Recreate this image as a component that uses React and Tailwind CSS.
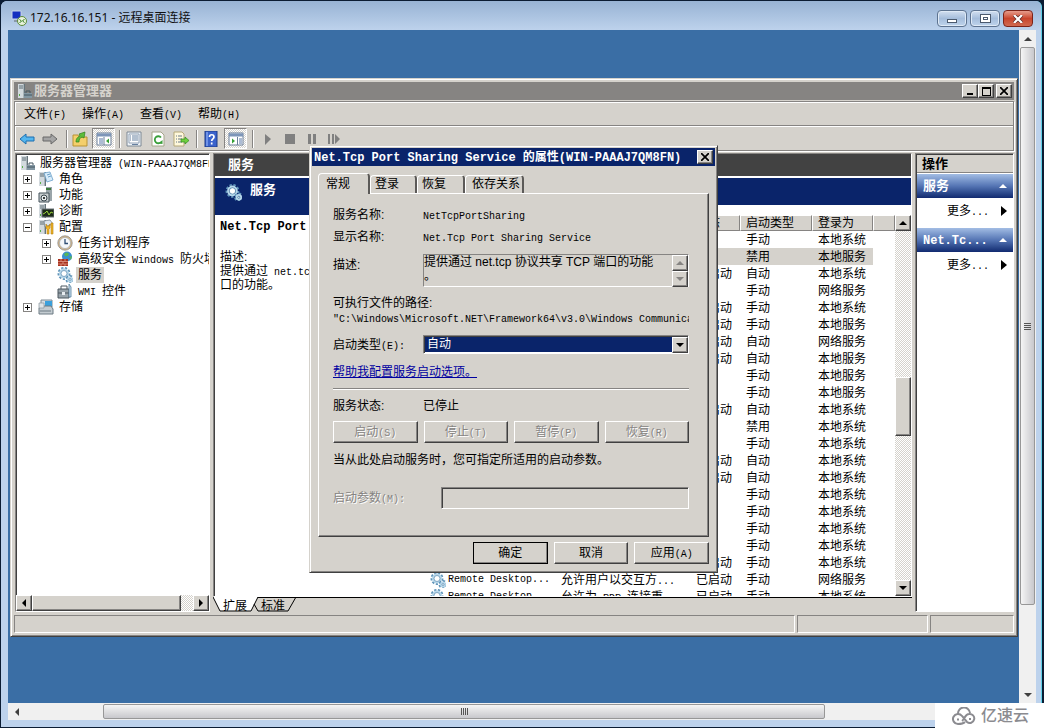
const raised = 'bg-[#d5d2cc] border border-t-white border-l-white border-r-[#404040] border-b-[#404040] shadow-[inset_-1px_-1px_0_#868482]'
const sunken = 'border border-t-[#868482] border-l-[#868482] border-r-white border-b-white'
const dither = 'bg-[repeating-conic-gradient(#d5d2cc_0_25%,#fff_0_50%)] bg-[length:2px_2px]'

const rows = [
  ['', '', '', '手动', '本地系统'],
  ['', '', '', '禁用', '本地服务'],
  ['', '', '已启动', '自动', '本地系统'],
  ['', '', '', '手动', '网络服务'],
  ['', '', '已启动', '手动', '本地系统'],
  ['', '', '已启动', '手动', '本地服务'],
  ['', '', '已启动', '自动', '网络服务'],
  ['', '', '已启动', '自动', '本地服务'],
  ['', '', '', '手动', '本地服务'],
  ['', '', '', '手动', '本地服务'],
  ['', '', '已启动', '自动', '本地系统'],
  ['', '', '', '禁用', '本地系统'],
  ['', '', '', '手动', '本地系统'],
  ['', '', '已启动', '自动', '本地系统'],
  ['', '', '已启动', '自动', '本地系统'],
  ['', '', '', '手动', '本地系统'],
  ['', '', '', '手动', '本地系统'],
  ['', '', '', '手动', '本地系统'],
  ['', '', '', '手动', '本地系统'],
  ['', '', '已启动', '手动', '本地系统'],
  ['Remote Desktop...', '允许用户以交互方...', '已启动', '手动', '网络服务'],
  ['Remote Desktop...', '允许为 RDP 连接重...', '已启动', '手动', '本地系统'],
]

const tree = [
  { label: '角色', icon: 'roles', sign: '+' },
  { label: '功能', icon: 'features', sign: '+' },
  { label: '诊断', icon: 'diag', sign: '+' },
  { label: '配置', icon: 'config', sign: '-' },
  { label: '任务计划程序', icon: 'clock', sign: '+', child: true },
  { label: '高级安全 Windows 防火墙', icon: 'firewall', sign: '+', child: true },
  { label: '服务', icon: 'gears', child: true, selected: true },
  { label: 'WMI 控件', icon: 'wmi', child: true },
  { label: '存储', icon: 'storage', sign: '+' },
]

// Half-width runs are set in the mono face so two of them fill one CJK cell
function Mixed({ children, latin = 'text-[10px]' }) {
  return children.split(/([\x20-\x7e]+)/).filter(Boolean).map((part, i) =>
    /^[\x20-\x7e]+$/.test(part)
      ? <span key={i} className={`whitespace-pre font-['Liberation_Mono',monospace] leading-none ${latin}`}>{part}</span>
      : part
  )
}

function Arrow({ dir, className = 'fill-black' }) {
  const d = {
    up: 'M0 6 L4 2 L8 6Z',
    down: 'M0 2 L4 6 L8 2Z',
    left: 'M6 0 L2 4 L6 8Z',
    right: 'M2 0 L6 4 L2 8Z',
  }[dir]
  return <svg viewBox="0 0 8 8" className={`size-2 shrink-0 ${className}`}><path d={d} /></svg>
}

function Tower() {
  return (
    <>
      <path d="M1 1h7v14H1z" fill="#a9b3b8" />
      <path d="M1 1h5v14H1z" fill="#d3dade" />
      <path d="M2 3h4M2 5h4" stroke="#5c6c74" />
      <path d="M7.500 1v14" stroke="#66747b" />
      <path d="M2 11h1v2H2z" fill="#5bb04a" />
    </>
  )
}

function Gear({ x, y, r }) {
  return (
    <g transform={`translate(${x} ${y})`}>
      <circle r={r} fill="none" stroke="#5f93b8" strokeWidth="3" strokeDasharray="2 1.400" />
      <circle r={r - 1} fill="none" stroke="#b7d7ea" strokeWidth="2" />
      <circle r={r - 2} fill="#fff" stroke="#4d83aa" strokeWidth=".7" />
    </g>
  )
}

const drawings = {
  server: <><Tower /><path d="M7 10h8v5H7z" fill="#8397a3" /><path d="M9 10V8h4v2M7 12h8" fill="none" stroke="#445661" /></>,
  roles: <><Tower /><path d="M6 2l6-1 3 8-6 2z" fill="#d8ecfa" stroke="#6aa0c8" strokeWidth=".8" /><path d="M9 4l3-1M10 6l3-1" stroke="#6aa0c8" /></>,
  features: <><path d="M8 0h6v14H8z" fill="#9aa5aa" /><path d="M8 2h5" stroke="#3c7a3c" strokeWidth="2" /><path d="M1 6h10v9H1z" fill="#c8cdd0" stroke="#45525a" /><circle cx="6" cy="11" r="3" fill="#e9eef0" stroke="#38444b" /><circle cx="6" cy="11" r="1" /></>,
  diag: <><Tower /><path d="M4 6h12v8H4z" fill="#1c2a18" stroke="#6b7378" /><path d="M5 11l2-1 2-2 2 4 2-3 2 1" fill="none" stroke="#9ad13c" /></>,
  config: <><Tower /><path d="M6 2l6-1 3 4-8 3z" fill="#dfe6ee" stroke="#7a8894" strokeWidth=".8" /><path d="M8 5v4l1 1v5h2v-5l1-1V5l-1 2H9zM13 4h2v11h-2z" fill="#f0b52a" stroke="#b37c0c" strokeWidth=".6" /></>,
  clock: <><circle cx="8" cy="8" r="7.200" fill="#d9b98a" stroke="#8a8a8a" strokeWidth=".8" /><circle cx="8" cy="8" r="5.500" fill="#f5f8fb" stroke="#9aa5ad" strokeWidth=".6" /><path d="M8 4v4.500h3" fill="none" stroke="#2d4d74" strokeWidth="1.300" /></>,
  firewall: <><circle cx="10" cy="5.500" r="5" fill="#3b8fd0" /><path d="M7 3q3-3 5 0q-1 3-4 2zM12 6l3-1-1 4z" fill="#58b558" /><path d="M1 8h10v7H1z" fill="#a8321e" /><path d="M1 10.500h10M1 13h10M4 8v2.500M8 8v2.500M6 10.500V13M4 13v2M8 13v2" stroke="#e6a493" strokeWidth=".7" /></>,
  gears: <><Gear x={7} y={6.5} r={5} /><Gear x={13} y={12.5} r={3} /></>,
  wmi: <><path d="M1 6h11v9H1z" fill="#98a3aa" stroke="#4d5960" /><path d="M4 6V3h6v3M1 10h11" fill="none" stroke="#4d5960" /><path d="M12 1l2 3v10h-2z" fill="#cfe0ee" stroke="#54809e" strokeWidth=".8" /><path d="M5 9h3v3H5z" fill="#e8edf0" /></>,
  storage: <><path d="M3 1h11v7H3z" fill="#d6dde2" stroke="#7d8b94" /><path d="M7 2h7v5H7z" fill="#3aa0dc" /><path d="M1 9l3-2h9l2 3v5H1z" fill="#c4ccd1" stroke="#6c7a83" /><path d="M2 12h11" stroke="#6c7a83" /><path d="M1 4h5v5H1z" fill="#dfe4e6" stroke="#8b979e" strokeWidth=".7" /></>,
  back: <path d="M1 8l6-5v3h8v4H7v3z" fill="#54b6ee" stroke="#1d6fb0" />,
  forward: <path d="M15 8L9 3v3H1v4h8v3z" fill="#a5a5a5" stroke="#686868" />,
  folder: <><path d="M1 4h5l1 2h8v9H1z" fill="#f4cf6b" stroke="#b99335" /><path d="M4 11c0-4 2-5 4-6L7 3l6-2-1 6-2-1c-2 1-3 2-3 5z" fill="#5ebd3a" stroke="#2f7f1c" strokeWidth=".7" /></>,
  paneLeft: <><path d="M1 2h14v12H1z" fill="#fff" stroke="#6b7f99" /><path d="M1 4h14" stroke="#7d95b8" strokeWidth="3" /><path d="M8 6v8" stroke="#6b7f99" /><path d="M3 8h4M3 10h4M3 12h4" stroke="#5a78a8" /><path d="M13 7.500v5l-3-2.500z" fill="#35a035" /></>,
  paneRight: <><path d="M1 2h14v12H1z" fill="#fff" stroke="#6b7f99" /><path d="M1 4h14" stroke="#7d95b8" strokeWidth="3" /><path d="M9.500 6v8" stroke="#6b7f99" /><path d="M11 8h3M11 10h3M11 12h3" stroke="#5a78a8" /><path d="M4 7.500v5l3-2.500z" fill="#35a035" /></>,
  props: <><path d="M1 1h14v14H1z" fill="#eef3f8" stroke="#7c8894" /><path d="M3 3h10v9H3z" fill="#fff" stroke="#8fa0b4" /><path d="M4 5h1M6 5h6M4 7h1M6 7h6M4 9h1M6 9h6M6 13.500h6" stroke="#6781a0" /></>,
  refresh: <><path d="M2 1h9l3 3v11H2z" fill="#fff" stroke="#a5a58a" /><path d="M11 6.500A3.500 3.500 0 1 0 11 11" fill="none" stroke="#3a9f3a" strokeWidth="1.800" /><path d="M8.500 12.500l4 .5V9z" fill="#3a9f3a" /></>,
  exportList: <><path d="M1 1h8l2 2v12H1z" fill="#fff8dc" stroke="#b5a878" /><path d="M3 5h1M5 5h4M3 8h1M5 8h4M3 11h1M5 11h4" stroke="#6a7a8a" /><path d="M8 8h4V6l4 3.500-4 3.500v-2H8z" fill="#6fcf3f" stroke="#2f8a1c" strokeWidth=".7" /></>,
  help: <><path d="M2 0h12v16H2z" fill="#3a63cc" stroke="#1c3a86" /><path d="M3 1h2v14H3z" fill="#6f92e6" /><path d="M6.500 6c0-3 4.500-3 4.500 0c0 2-2.300 1.800-2.300 4M8.700 11.500v2" fill="none" stroke="#fff" strokeWidth="1.700" /></>,
  play: <path d="M5 3l6 5-6 6z" fill="#808080" />,
  stop: <path d="M3 3h10v10H3z" fill="#808080" />,
  pause: <path d="M4 3h3v10H4zM9 3h3v10H9z" fill="#808080" />,
  step: <path d="M2 3h2v10H2zM6 3h2v10H6zM9 3l5 5-5 5z" fill="#808080" />,
  rdp: <><path d="M1 1h9v8H1z" fill="#1530c0" stroke="#c8d4e8" /><path d="M3 10h5v2H3z" fill="#8a98a8" /><circle cx="11" cy="11" r="4.500" fill="#e8f2dc" stroke="#5b8a3a" /><path d="M8.500 9.500l2 1.500-2 2M13.500 9l-2 2 2 1.500" fill="none" stroke="#2f7a1c" /></>,
}

function Icon({ name, className = 'size-4' }) {
  return <svg viewBox="0 0 16 16" className={`shrink-0 ${className}`}>{drawings[name]}</svg>
}

function ToolButton({ icon, label, pressed, className = '' }) {
  return (
    <button
      aria-label={label}
      className={`flex h-[21px] items-center justify-center ${pressed ? `w-[23px] ${sunken} ${dither}` : 'w-4'} ${className}`}
    >
      <Icon name={icon} />
    </button>
  )
}

function Separator() {
  return <span className="h-[18px] w-0.5 border-l border-r border-l-[#868482] border-r-white" />
}

function ScrollButton({ dir, muted }) {
  return (
    <button aria-label={dir} className={`flex size-4 shrink-0 items-center justify-center ${raised}`}>
      <Arrow dir={dir} className={muted ? 'fill-[#868482]' : 'fill-black'} />
    </button>
  )
}

function CloseGlyph({ className = 'stroke-black' }) {
  return <svg viewBox="0 0 8 8" className={`size-2 ${className}`}><path d="M0 0l8 8M8 0L0 8" strokeWidth="1.700" /></svg>
}

function ClientTitleBar() {
  const btn = 'flex h-[17px] w-[30px] items-center justify-center rounded-sm border border-[#5d7390] bg-linear-to-b from-[#d3e0f0] via-[#a5bddb] to-[#bfd4ec] shadow-[inset_0_0_0_1px_#dfeaf6]'
  return (
    <header className="flex h-[29px] shrink-0 items-center bg-linear-to-b from-[#98b3d4] to-[#bdd2ec] pt-1 pr-2 pl-2.5">
      <Icon name="rdp" />
      <h1 className="ml-[3px] flex-1 font-['Noto_Sans','Noto_Sans_CJK_SC',sans-serif] text-xs text-[#111]">172.16.16.151 - 远程桌面连接</h1>
      <div className="mt-0.5 flex gap-[3px]">
        <button aria-label="最小化" className={btn}>
          <span className="mt-1 h-1 w-2.5 border border-[#4b5a6e] bg-white" />
        </button>
        <button aria-label="还原" className={btn}>
          <span className="flex h-[9px] w-[11px] items-center justify-center border border-[#4b5a6e] bg-white">
            <span className="h-[3px] w-[5px] border border-[#4b5a6e]" />
          </span>
        </button>
        <button aria-label="关闭" className="flex h-[17px] w-[30px] items-center justify-center rounded-sm border border-[#7c2318] bg-linear-to-b from-[#e69c8c] via-[#c8442c] to-[#d06a50]">
          <svg viewBox="0 0 10 8" className="h-2 w-2.5">
            <path d="M1 0l8 8M9 0L1 8" stroke="#5b2a28" strokeWidth="3.600" />
            <path d="M1 0l8 8M9 0L1 8" stroke="#fff" strokeWidth="2.200" />
          </svg>
        </button>
      </div>
    </header>
  )
}

function ManagerTitle() {
  const btn = `flex h-3.5 w-4 items-center justify-center ${raised}`
  return (
    <div className="flex h-[18px] shrink-0 items-center bg-[#868482] pr-0.5 pl-[3px]">
      <Icon name="server" />
      <h2 className="ml-px flex-1 text-[13px] leading-4 font-bold text-[#d5d2cc]">服务器管理器</h2>
      <button aria-label="最小化窗口" className={btn}><span className="mt-1.5 h-0.5 w-1.5 bg-black" /></button>
      <button aria-label="最大化窗口" className={btn}><span className="h-[9px] w-[9px] border border-t-2 border-black" /></button>
      <button aria-label="关闭窗口" className={`ml-0.5 ${btn}`}><CloseGlyph /></button>
    </div>
  )
}

function Toolbar() {
  return (
    <div className="flex h-6 items-center border-t border-white pl-1">
      <ToolButton icon="back" label="后退" />
      <ToolButton icon="forward" label="前进" className="mr-2 ml-[7px]" />
      <Separator />
      <ToolButton icon="folder" label="向上" className="mx-1" />
      <ToolButton icon="paneLeft" label="显示控制台树" pressed className="mr-1" />
      <Separator />
      <ToolButton icon="props" label="属性" className="ml-[5px]" />
      <ToolButton icon="refresh" label="刷新" className="ml-2" />
      <ToolButton icon="exportList" label="导出列表" className="mr-[7px] ml-[7px]" />
      <Separator />
      <ToolButton icon="help" label="帮助" className="mx-[5px]" />
      <ToolButton icon="paneRight" label="显示操作窗格" pressed className="mr-[5px]" />
      <Separator />
      <div className="ml-1.5 flex gap-1.5">
        <ToolButton icon="play" label="启动服务" />
        <ToolButton icon="stop" label="停止服务" />
        <ToolButton icon="pause" label="暂停服务" />
        <ToolButton icon="step" label="重新启动服务" />
      </div>
    </div>
  )
}

function TreeItem({ item }) {
  return (
    <li className={`flex h-4 items-center whitespace-nowrap ${item.child ? 'pl-6' : 'pl-[5px]'}`}>
      {item.sign ? (
        <span className="relative mr-1.5 size-[9px] shrink-0 border border-[#868482]">
          <span className="absolute top-[3px] left-px h-px w-[5px] bg-black" />
          {item.sign === '+' && <span className="absolute top-px left-[3px] h-[5px] w-px bg-black" />}
        </span>
      ) : <span className="mr-1.5 w-[9px] shrink-0" />}
      <Icon name={item.icon} />
      <span className={`ml-[3px] px-0.5 leading-4 ${item.selected ? 'bg-[#d5d2cc]' : ''}`}><Mixed>{item.label}</Mixed></span>
    </li>
  )
}

function TreePane() {
  return (
    <nav className={`flex w-[195px] shrink-0 flex-col bg-white ${sunken} shadow-[inset_1px_1px_0_#404040]`}>
      <div className="flex-1 overflow-hidden pt-px pl-0.5">
        <div className="flex h-4 items-center pl-0.5 whitespace-nowrap">
          <Icon name="server" />
          <span className="ml-1"><Mixed>服务器管理器 (WIN-PAAAJ7QM8FN)</Mixed></span>
        </div>
        <ul>{tree.map((item) => <TreeItem key={item.label} item={item} />)}</ul>
      </div>
      <div className={`flex h-4 ${dither}`}>
        <ScrollButton dir="left" />
        <div className={`mr-3 flex-1 ${raised}`} />
        <ScrollButton dir="right" />
      </div>
    </nav>
  )
}

function ServiceTable() {
  const head = 'h-4 border-t border-r border-b border-l border-t-white border-l-white border-r-[#868482] border-b-[#868482] bg-[#d5d2cc] pl-[5px] text-left font-normal leading-none'
  return (
    <div className="flex min-h-0 flex-1">
      <div className="flex-1 overflow-hidden">
        <table className="w-full table-fixed border-separate border-spacing-0 whitespace-nowrap">
          <colgroup>
            <col className="w-[125px]" />
            <col className="w-[135px]" />
            <col className="w-[50px]" />
            <col className="w-[72px]" />
            <col className="w-[61px]" />
            <col />
          </colgroup>
          <thead>
            <tr>
              {['名称', '描述', '状态', '启动类型', '登录为', ''].map((h, i) => <th key={i} className={head}>{h}</th>)}
            </tr>
          </thead>
          <tbody>
            {rows.map((row, i) => (
              <tr key={i} className="h-[17px]">
                {row.map((cell, j) => (
                  <td key={j} className={`h-[17px] overflow-hidden p-0 leading-4 ${j ? 'pl-1.5' : ''} ${i === 1 ? 'bg-[#d5d2cc]' : ''}`}>
                    {j === 0 && cell ? (
                      <span className="flex items-center gap-0.5"><Icon name="gears" /><Mixed>{cell}</Mixed></span>
                    ) : <Mixed>{cell}</Mixed>}
                  </td>
                ))}
                <td />
              </tr>
            ))}
          </tbody>
        </table>
      </div>
      <div className={`flex w-4 flex-col ${dither}`}>
        <ScrollButton dir="up" />
        <div className="flex-[147]" />
        <div className={`flex-[57] ${raised}`} />
        <div className="flex-[145]" />
        <ScrollButton dir="down" />
      </div>
    </div>
  )
}

function ServicesPane() {
  return (
    <section className="flex min-w-0 flex-1 flex-col">
      <div className={`flex min-h-0 flex-1 flex-col bg-white ${sunken} shadow-[inset_1px_1px_0_#404040]`}>
        <h2 className="h-[22px] shrink-0 bg-[#424242] pl-3.5 text-[13px] leading-[22px] font-bold text-white">服务</h2>
        <div className="mt-0.5 flex min-h-0 flex-1 pl-px">
          <div className="w-[215px] shrink-0">
            <div className="flex h-[37px] items-start bg-[#0a246a] pt-1 pl-2.5">
              <Icon name="gears" className="mt-0.5 size-[17px]" />
              <h3 className="ml-2 text-[13px] leading-4 font-bold text-white">服务</h3>
            </div>
            <div className="w-[205px] pt-1 pl-[5px] leading-[14px]">
              <p className="h-[31px] overflow-hidden font-bold whitespace-nowrap"><Mixed latin="text-xs">Net.Tcp Port Sharing</Mixed></p>
              <p>描述:</p>
              <p><Mixed>提供通过 net.tcp 协议共享 TCP 端口的功能。</Mixed></p>
            </div>
          </div>
          <div className="flex min-w-0 flex-1 flex-col">
            <div className="mb-2.5 h-[27px] shrink-0 bg-[#0a246a]" />
            <ServiceTable />
          </div>
        </div>
      </div>
      <div className="relative flex h-[15px] shrink-0 border-t border-black pt-px">
        <svg viewBox="0 0 83 15" className="absolute -top-px left-0 h-[15px] w-[83px]">
          <path d="M0 0l7 14h31l7-14z" fill="#fff" />
          <path d="M0 0l7 14h31l7-14M41 7l4 7h30l8-14" fill="none" stroke="#000" />
        </svg>
        <button className="relative ml-2.5 leading-[14px]">扩展</button>
        <button className="relative ml-3.5 leading-[14px]">标准</button>
      </div>
    </section>
  )
}

function ActionGroup({ title }) {
  return (
    <div className="mb-[5px]">
      <div className="flex h-6 items-center justify-between bg-linear-to-b from-[#a3bde4] via-[#5575b4] to-[#122a70] pr-1.5 pl-1.5 text-[13px] font-bold text-white">
        <span><Mixed latin="text-xs">{title}</Mixed></span>
        <Arrow dir="up" className="fill-white" />
      </div>
      <button className="flex h-[25px] w-full items-center justify-between pr-1.5 pl-[30px]">
        <span><Mixed>更多...</Mixed></span>
        <svg viewBox="0 0 6 10" className="h-2.5 w-1.5"><path d="M0 0l6 5-6 5z" /></svg>
      </button>
    </div>
  )
}

function ActionsPane() {
  return (
    <aside className={`w-[99px] shrink-0 bg-white ${sunken} shadow-[inset_1px_1px_0_#404040]`}>
      <div className="pt-px pl-px">
        <h2 className="mb-px h-[18px] border-b border-[#868482] bg-[#d5d2cc] pl-[5px] text-[13px] leading-[17px] font-bold">操作</h2>
        <ActionGroup title="服务" />
        <ActionGroup title="Net.Tc..." />
      </div>
    </aside>
  )
}

function ServerManager() {
  return (
    <main className="mt-12 mr-px mb-[66px] ml-0.5 flex min-w-0 flex-1 flex-col border border-t-[#d5d2cc] border-r-[#404040] border-b-[#404040] border-l-[#d5d2cc] bg-[#d5d2cc] p-[3px] shadow-[inset_1px_1px_0_#fff,inset_-1px_-1px_0_#868482]">
      <ManagerTitle />
      <div className="mt-px border border-[#868482] shadow-[inset_1px_1px_0_#fff,1px_1px_0_#fff]">
        <div className="flex h-6 items-center gap-4 border-b border-[#868482] pl-[9px]">
          {['文件(F)', '操作(A)', '查看(V)', '帮助(H)'].map((m) => (
            <button key={m} className="leading-4"><Mixed>{m}</Mixed></button>
          ))}
        </div>
        <Toolbar />
      </div>
      <div className="mt-0.5 ml-px flex min-h-0 flex-1 gap-[3px]">
        <TreePane />
        <ServicesPane />
        <ActionsPane />
      </div>
      <footer className="mt-[3px] flex h-[18px] shrink-0 gap-0.5">
        <div className={`flex-1 ${sunken}`} />
        <div className={`w-[131px] ${sunken}`} />
        <div className={`w-[84px] ${sunken}`} />
      </footer>
    </main>
  )
}

function DialogButton({ children, disabled, primary }) {
  return (
    <button
      disabled={disabled}
      className={`flex h-[22px] flex-1 items-center justify-center ${raised} ${disabled ? 'text-[#868482] [text-shadow:1px_1px_0_#fff]' : ''} ${primary ? 'outline outline-1 -outline-offset-1 outline-black' : ''}`}
    >
      <span><Mixed>{children}</Mixed></span>
    </button>
  )
}

function PropertiesDialog() {
  const edge = 'border-t border-r-2 border-l border-t-white border-r-[#5c5a58] border-l-white rounded-t-sm text-left'
  const tab = `h-[18px] leading-[17px] ${edge}`
  return (
    <div role="dialog" className="absolute top-[115px] left-[301px] w-[409px] border border-t-[#d5d2cc] border-r-[#404040] border-b-[#404040] border-l-[#d5d2cc] bg-[#d5d2cc] p-0.5 shadow-[inset_1px_1px_0_#fff,inset_-1px_-1px_0_#868482]">
      <div className="flex h-[18px] items-center bg-[#0a246a] pr-0.5 pl-0.5 text-white">
        <h2 className="flex-1 font-bold whitespace-nowrap"><Mixed latin="text-xs">Net.Tcp Port Sharing Service 的属性(WIN-PAAAJ7QM8FN)</Mixed></h2>
        <button aria-label="关闭对话框" className={`flex h-3.5 w-4 items-center justify-center ${raised}`}><CloseGlyph /></button>
      </div>
      <div className="px-1.5 pt-[7px] pb-1.5">
        <div className="flex items-end">
          <button className={`relative z-10 -mb-px h-[21px] w-[52px] bg-[#d5d2cc] pb-px pl-[7px] ${edge}`}>常规</button>
          <button className={`w-[47px] pl-1 ${tab}`}>登录</button>
          <button className={`w-12 pl-1 ${tab}`}>恢复</button>
          <button className={`w-[59px] pl-1.5 ${tab}`}>依存关系</button>
        </div>
        <div className={`pt-2.5 pr-[19px] pb-[27px] pl-3.5 ${raised}`}>
          <dl className="grid grid-cols-[90px_1fr] leading-[22px]">
            <dt>服务名称:</dt>
            <dd><Mixed>NetTcpPortSharing</Mixed></dd>
            <dt>显示名称:</dt>
            <dd><Mixed>Net.Tcp Port Sharing Service</Mixed></dd>
          </dl>
          <div className="mt-1.5 flex">
            <label htmlFor="desc" className="w-[90px] leading-[22px]">描述:</label>
            <div className={`flex h-[33px] flex-1 ${sunken}`}>
              <textarea
                id="desc"
                readOnly
                className="h-full flex-1 resize-none overflow-hidden leading-[14px] outline-none"
                defaultValue={'提供通过 net.tcp 协议共享 TCP 端口的功能\n。'}
              />
              <div className="flex flex-col">
                <ScrollButton dir="up" muted />
                <ScrollButton dir="down" muted />
              </div>
            </div>
          </div>
          <label htmlFor="path" className="mt-2 block leading-4">可执行文件的路径:</label>
          <input
            id="path"
            readOnly
            className="block h-4 w-full font-['Liberation_Mono',monospace] text-[10px] outline-none"
            defaultValue={'"C:\\Windows\\Microsoft.NET\\Framework64\\v3.0\\Windows Communication'}
          />
          <div className="mt-2 flex items-center">
            <label htmlFor="startup" className="w-[90px]"><Mixed>启动类型(E):</Mixed></label>
            <div className={`relative h-[19px] flex-1 bg-white p-px ${sunken} shadow-[inset_1px_1px_0_#404040]`}>
              <select id="startup" className="block h-[15px] w-[249px] appearance-none bg-[#0a246a] pl-0.5 leading-[15px] text-white outline-none">
                <option>自动</option>
                <option>手动</option>
                <option>禁用</option>
              </select>
              <span className={`pointer-events-none absolute top-px right-0 flex size-4 items-center justify-center ${raised}`}>
                <Arrow dir="down" />
              </span>
            </div>
          </div>
          <a href="#help" className="mt-2.5 block w-fit leading-4 text-[#0000a0] underline">帮助我配置服务启动选项。</a>
          <hr className="mt-2 h-0.5 border-t border-b border-t-[#868482] border-b-white" />
          <dl className="mt-2 grid grid-cols-[90px_1fr] leading-4">
            <dt>服务状态:</dt>
            <dd>已停止</dd>
          </dl>
          <div className="mt-[7px] flex gap-1.5">
            <DialogButton disabled>启动(S)</DialogButton>
            <DialogButton disabled>停止(T)</DialogButton>
            <DialogButton disabled>暂停(P)</DialogButton>
            <DialogButton disabled>恢复(R)</DialogButton>
          </div>
          <p className="mt-[9px] leading-4">当从此处启动服务时，您可指定所适用的启动参数。</p>
          <div className="mt-[19px] flex items-center">
            <label htmlFor="params" className="w-[108px] text-[#868482] [text-shadow:1px_1px_0_#fff]"><Mixed>启动参数(M):</Mixed></label>
            <input id="params" disabled className={`h-[22px] min-w-0 flex-1 ${sunken} shadow-[inset_1px_1px_0_#404040]`} />
          </div>
        </div>
        <div className="mt-[5px] ml-[155px] flex gap-1.5">
          <DialogButton primary>确定</DialogButton>
          <DialogButton>取消</DialogButton>
          <DialogButton>应用(A)</DialogButton>
        </div>
      </div>
    </div>
  )
}

function Watermark() {
  return (
    <div className="absolute right-0 bottom-0 flex h-[25px] w-[109px] items-center bg-white pl-4">
      <svg viewBox="0 0 26 18" className="h-[18px] w-[26px] fill-none stroke-[#8b8b90]" strokeWidth="2">
        <path d="M7 7a6 6 0 0 1 12-1M14 15c-2 2-4 2-7 2a5 5 0 1 1 4-8l5 6a4.500 4.500 0 1 0 2-8c-4 0-4 5-7 7" />
        <path d="M8 12.500h-2M18 12h2" />
      </svg>
      <span className="ml-1 text-base leading-none font-medium text-[#8b8b90]">亿速云</span>
    </div>
  )
}

export default function App() {
  return (
    <div className="relative h-screen min-h-[700px] w-full overflow-hidden bg-[#0b1c33] pt-px pr-0.5 pb-px pl-px font-['Liberation_Sans','Noto_Sans_CJK_SC',sans-serif] text-xs text-black">
      <div className="flex h-full flex-col overflow-hidden rounded-t-md border-r border-[#5fd0e8] bg-[#bdd2ec]">
        <ClientTitleBar />
        <div className="mr-[5px] mb-[7px] ml-[7px] flex min-h-0 flex-1 flex-col">
          <div className="flex min-h-0 flex-1">
            <div className="relative flex min-w-0 flex-1 bg-[#3a6ea5]">
              <ServerManager />
              <PropertiesDialog />
            </div>
            <div className="flex w-[17px] shrink-0 flex-col items-center bg-[#f0f0f0]">
              <span className="flex h-[17px] items-center"><Arrow dir="up" className="fill-[#404040]" /></span>
              <div className="flex w-[15px] flex-[558] flex-col items-center justify-center gap-px rounded-xs border border-[#979797] bg-linear-to-r from-[#f5f5f5] to-[#c8c8cc]">
                {[0, 1, 2, 3].map((i) => <span key={i} className="h-px w-[7px] bg-[#555]" />)}
              </div>
              <div className="flex-[81]" />
              <span className="flex h-[17px] items-center"><Arrow dir="down" className="fill-[#404040]" /></span>
            </div>
          </div>
          <div className="flex h-[17px] shrink-0 items-center bg-[#f0f0f0]">
            <span className="flex w-[17px] justify-center"><Arrow dir="left" className="fill-[#404040]" /></span>
            <div className="flex-[78]" />
            <div className="flex h-[15px] flex-[722] items-center justify-center gap-px rounded-xs border border-[#979797] bg-linear-to-b from-[#f5f5f5] to-[#c8c8cc]">
              {[0, 1, 2, 3].map((i) => <span key={i} className="h-[7px] w-px bg-[#555]" />)}
            </div>
            <div className="flex-[211]" />
          </div>
        </div>
      </div>
      <Watermark />
    </div>
  )
}
